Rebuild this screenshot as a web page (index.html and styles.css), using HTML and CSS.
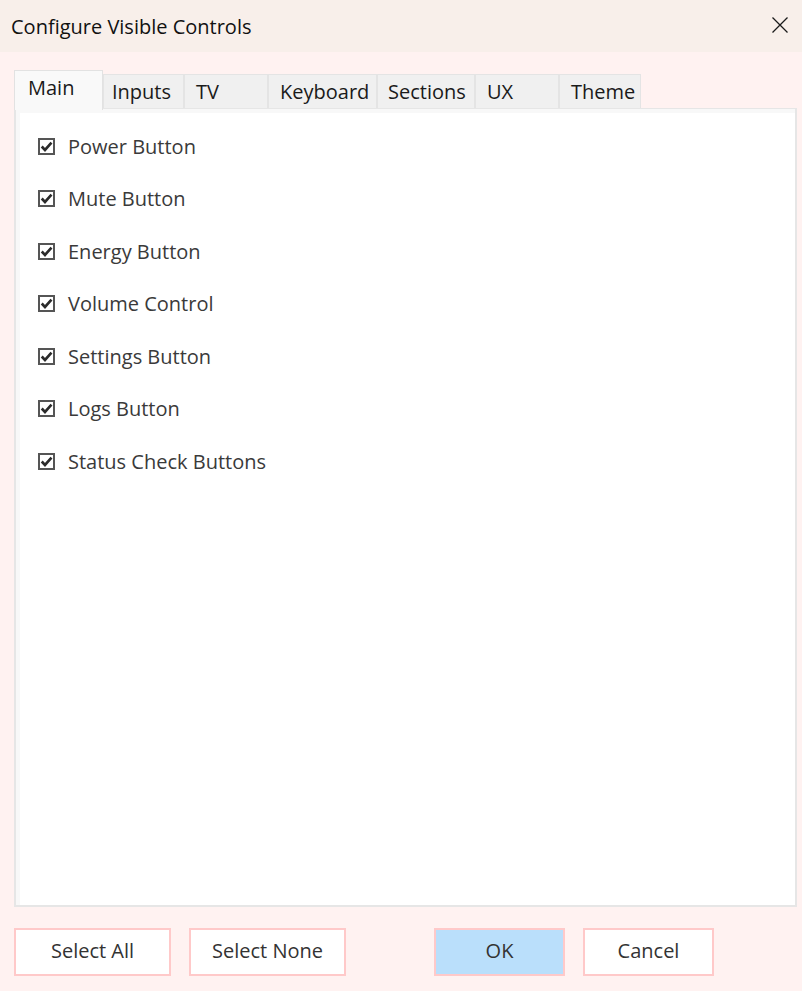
FILE: index.html
```html
<!DOCTYPE html>
<html lang="en">
<head>
<meta charset="utf-8">
<title>Configure Visible Controls</title>
<link rel="stylesheet" href="styles.css">
</head>
<body>
<div class="dialog">
  <header class="titlebar">
    <span class="title">Configure Visible Controls</span>
    <button class="close" aria-label="Close">
      <svg width="16" height="16" viewBox="0 0 16 16"><path d="M0.5 0.5 L15.5 15.5 M15.5 0.5 L0.5 15.5" stroke="#1a1a1a" stroke-width="1.3" fill="none"/></svg>
    </button>
  </header>
  <main class="content">
    <div class="tabs">
      <div class="tab active">Main</div>
      <div class="tab">Inputs</div>
      <div class="tab">TV</div>
      <div class="tab">Keyboard</div>
      <div class="tab">Sections</div>
      <div class="tab">UX</div>
      <div class="tab">Theme</div>
    </div>
    <section class="panel">
      <ul class="checklist">
        <li class="item"><span class="box"><svg viewBox="0 0 12 12" width="13" height="13"><path d="M1.6 6 L4.6 9.2 L10.6 2.4" stroke="#2b2b2b" stroke-width="2.4" fill="none"/></svg></span><span class="label">Power Button</span></li>
        <li class="item"><span class="box"><svg viewBox="0 0 12 12" width="13" height="13"><path d="M1.6 6 L4.6 9.2 L10.6 2.4" stroke="#2b2b2b" stroke-width="2.4" fill="none"/></svg></span><span class="label">Mute Button</span></li>
        <li class="item"><span class="box"><svg viewBox="0 0 12 12" width="13" height="13"><path d="M1.6 6 L4.6 9.2 L10.6 2.4" stroke="#2b2b2b" stroke-width="2.4" fill="none"/></svg></span><span class="label">Energy Button</span></li>
        <li class="item"><span class="box"><svg viewBox="0 0 12 12" width="13" height="13"><path d="M1.6 6 L4.6 9.2 L10.6 2.4" stroke="#2b2b2b" stroke-width="2.4" fill="none"/></svg></span><span class="label">Volume Control</span></li>
        <li class="item"><span class="box"><svg viewBox="0 0 12 12" width="13" height="13"><path d="M1.6 6 L4.6 9.2 L10.6 2.4" stroke="#2b2b2b" stroke-width="2.4" fill="none"/></svg></span><span class="label">Settings Button</span></li>
        <li class="item"><span class="box"><svg viewBox="0 0 12 12" width="13" height="13"><path d="M1.6 6 L4.6 9.2 L10.6 2.4" stroke="#2b2b2b" stroke-width="2.4" fill="none"/></svg></span><span class="label">Logs Button</span></li>
        <li class="item"><span class="box"><svg viewBox="0 0 12 12" width="13" height="13"><path d="M1.6 6 L4.6 9.2 L10.6 2.4" stroke="#2b2b2b" stroke-width="2.4" fill="none"/></svg></span><span class="label">Status Check Buttons</span></li>
      </ul>
    </section>
    <div class="actions">
      <button class="btn wide">Select All</button>
      <button class="btn wide">Select None</button>
      <button class="btn primary ok">OK</button>
      <button class="btn">Cancel</button>
    </div>
  </main>
</div>
</body>
</html>
```

FILE: styles.css
```css
* { box-sizing: border-box; }
html, body {
  margin: 0;
  padding: 0;
  background: #fff2f1;
  font-family: "Open Sans", "Noto Sans", "Liberation Sans", sans-serif;
  color: #1a1a1a;
}
.dialog {
  width: 802px;
  height: 991px;
  display: flex;
  flex-direction: column;
}
.titlebar {
  height: 52px;
  background: #f8efea;
  display: flex;
  align-items: center;
  justify-content: space-between;
  padding: 0 14px 0 11px;
}
.title {
  font-size: 20px;
  color: #111;
}
.close {
  border: 0;
  background: transparent;
  padding: 0;
  width: 16px;
  height: 16px;
  display: flex;
  margin-top: -3px;
}
.content {
  padding: 18px 5px 0 14px;
  display: flex;
  flex-direction: column;
}
.tabs {
  display: flex;
  align-items: flex-end;
  height: 38px;
  position: relative;
  z-index: 1;
}
.tab {
  height: 34px;
  background: #f0f0f0;
  border: 1px solid #e4e4e4;
  border-bottom: 0;
  font-size: 20px;
  line-height: 28px;
  padding: 3px 0 0 8px;
  color: #1a1a1a;
  white-space: nowrap;
}
.tab:nth-child(1) { width: 89px; }
.tab:nth-child(2) { width: 81px; }
.tab:nth-child(3) { width: 84px; padding-left: 11px; }
.tab:nth-child(4) { width: 109px; padding-left: 11px; }
.tab:nth-child(5) { width: 98px; padding-left: 10px; }
.tab:nth-child(6) { width: 84px; padding-left: 11px; }
.tab:nth-child(7) { width: 82px; padding-left: 11px; }
.tab.active {
  height: 40px;
  margin-bottom: -2px;
  background: #f9f9f9;
  border-color: #e2e2e2;
  padding: 3px 0 0 13px;
}
.panel {
  height: 799px;
  background: #fff;
  border: 2px solid #e6e6e6;
  border-top-width: 1px;
  box-shadow: inset 4px 4px 0 #f8f8f8;
}
.checklist {
  list-style: none;
  margin: 0;
  padding: 11px 0 0 22px;
}
.item {
  height: 52.5px;
  display: flex;
  align-items: center;
}
.box {
  width: 17px;
  height: 17px;
  border: 2px solid #555;
  background: #fff;
  display: flex;
  align-items: center;
  justify-content: center;
  margin-right: 13px;
}
.box svg { display: block; }
.label {
  font-size: 20px;
  color: #3a3a3a;
}
.actions {
  display: flex;
  gap: 18px;
  margin-top: 21px;
}
.btn {
  height: 48px;
  width: 131px;
  border: 2px solid #ffc9c9;
  background: #fff;
  font-family: inherit;
  font-size: 20px;
  color: #333;
  padding: 0 0 4px;
}
.btn.wide { width: 157px; }
.btn.primary { background: #badffb; }
.btn.ok { margin-left: 70px; }
```
